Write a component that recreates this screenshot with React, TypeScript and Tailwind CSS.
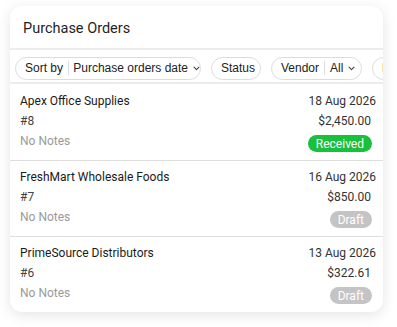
import React from "react";

const rows = [
  { name: "Apex Office Supplies", date: "18 Aug 2026", num: "#8", amount: "$2,450.00", status: "Received" },
  { name: "FreshMart Wholesale Foods", date: "16 Aug 2026", num: "#7", amount: "$850.00", status: "Draft" },
  { name: "PrimeSource Distributors", date: "13 Aug 2026", num: "#6", amount: "$322.61", status: "Draft" },
];

function Chevron() {
  return (
    <svg width="7" height="5" viewBox="0 0 7 5" className="ml-[5px] shrink-0">
      <path d="M1 1.2 L3.5 3.7 L6 1.2" fill="none" stroke="#444" strokeWidth="1.1" strokeLinecap="round" strokeLinejoin="round" />
    </svg>
  );
}

export default function App() {
  return (
    <div className="w-[397px] h-[327px] bg-white pt-[6px] pl-[10px]" style={{ fontFamily: "Roboto, 'Noto Sans', sans-serif" }}>
      <div className="w-[373px] h-[306px] rounded-[12px] bg-white shadow-[0_3px_14px_rgba(0,0,0,0.11)] overflow-hidden flex flex-col">
        <div className="h-[44px] shrink-0 flex items-center pl-[13px] pt-[3px] border-b-2 border-[#ececec]">
          <span className="text-[14.5px] text-[#1f1f1f]">Purchase Orders</span>
        </div>
        <div
          className="h-[34px] shrink-0 flex items-center gap-[10px] pl-[5px] pt-[4px] border-b-2 border-[#ececec] overflow-hidden whitespace-nowrap text-[12px] text-[#222]"
          style={{ fontFamily: "'Liberation Sans', Arial, sans-serif" }}
        >
          <div className="shrink-0 h-[23px] w-[186px] rounded-full border border-[#dcdcdc] flex items-center pl-[9px] overflow-hidden">
            <span>Sort by</span>
            <span className="mx-[5px] h-[14px] w-px bg-[#dcdcdc]" />
            <span>Purchase orders date</span>
            <Chevron />
          </div>
          <div className="shrink-0 h-[23px] w-[50px] rounded-full border border-[#dcdcdc] flex items-center pl-[9px] overflow-hidden">
            <span>Status</span>
          </div>
          <div className="shrink-0 h-[23px] w-[91px] rounded-full border border-[#dcdcdc] flex items-center pl-[9px] overflow-hidden">
            <span>Vendor</span>
            <span className="mx-[5px] h-[14px] w-px bg-[#dcdcdc]" />
            <span>All</span>
            <Chevron />
          </div>
          <div className="shrink-0 h-[23px] w-[70px] rounded-full border border-[#dcdcdc] flex items-center pl-[9px] overflow-hidden">
            <span>From</span>
          </div>
        </div>
        <div className="flex flex-col mt-[1px]">
          {rows.map((r, i) => (
            <div
              key={r.num}
              className={`h-[76px] shrink-0 flex justify-between pl-[10px] pr-[7px] pt-[6px] ${i < rows.length - 1 ? "border-b border-[#dedede]" : ""}`}
            >
              <div className="flex flex-col text-[12px] leading-[20px]">
                <span className="text-[#1a1a1a]">{r.name}</span>
                <span className="text-[#444]">{r.num}</span>
                <span className="text-[#9a9a9a]">No Notes</span>
              </div>
              <div className="flex flex-col items-end text-[12px] leading-[20px]">
                <span className="text-[#333]">{r.date}</span>
                <span className="text-[#333] mr-[5px]">{r.amount}</span>
                <span
                  className={`mr-[4px] mt-[4px] h-[17px] rounded-full px-[8px] flex items-center text-[12px] text-white ${
                    r.status === "Received" ? "bg-[#19c03c]" : "bg-[#c4c4c4]"
                  }`}
                >
                  {r.status}
                </span>
              </div>
            </div>
          ))}
        </div>
      </div>
    </div>
  );
}
